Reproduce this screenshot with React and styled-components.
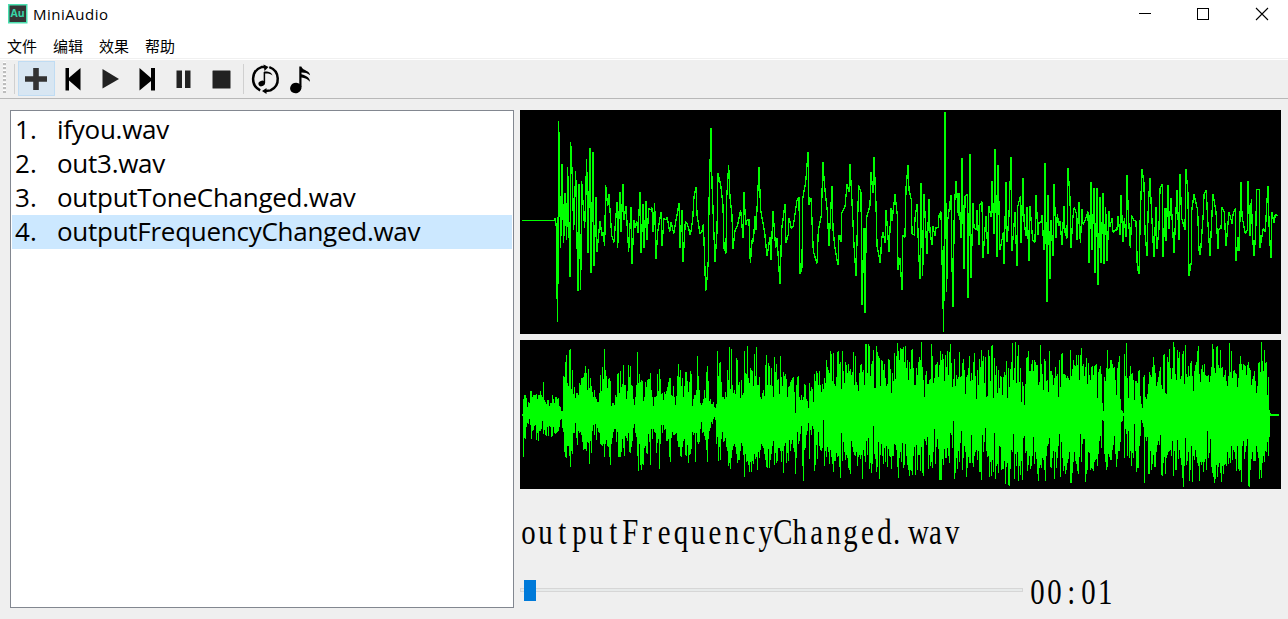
import React from "react";
import styled, { createGlobalStyle } from "styled-components";

const GlobalStyle = createGlobalStyle`
  * { box-sizing: border-box; }
  body { margin: 0; background: #efefef; overflow: hidden; }
`;

const Window = styled.div`
  width: 1288px;
  height: 619px;
  display: flex;
  flex-direction: column;
  background: #efefef;
  color: #000;
  font-family: "Open Sans", "Noto Sans CJK SC", sans-serif;
`;

const TitleBar = styled.header`
  height: 30px;
  flex: none;
  display: flex;
  align-items: flex-start;
  background: #fff;
  padding-left: 8px;
`;

const AppIcon = styled.svg`
  width: 20px;
  height: 20px;
  margin-top: 4px;
  display: block;
`;

const AppTitle = styled.h1`
  margin: 0 auto 0 5px;
  font-size: 15px;
  font-weight: 400;
  line-height: 28px;
  letter-spacing: 0.5px;
`;

const WindowControls = styled.div`
  display: flex;
`;

const ControlButton = styled.button`
  width: 58px;
  height: 28px;
  padding: 0;
  border: 0;
  background: transparent;

  svg { display: block; }
`;

const MenuBar = styled.nav`
  height: 30px;
  flex: none;
  display: flex;
  gap: 16px;
  padding-left: 7px;
  background: #fff;
  border-bottom: 1px solid #fff;
  box-shadow: inset 0 -1px 0 #f0f0f0;
`;

const MenuItem = styled.span`
  font: 15px/32px "Noto Sans CJK SC", sans-serif;
`;

const ToolBar = styled.div`
  height: 39px;
  flex: none;
  display: flex;
  align-items: flex-start;
  padding: 1px 0 0 3px;
  border-bottom: 1px solid #b8b8b8;
`;

const Grip = styled.div`
  width: 3px;
  height: 31px;
  margin: 1px 8px 0 0;
  background: repeating-linear-gradient(to bottom, #fff 0 1px, #bdbdbd 1px 3px, #efefef 3px 4px);
`;

const Separator = styled.div`
  width: 1px;
  height: 30px;
  margin: 3px 3px 0 ${(p) => (p.$left ? p.$left : 0)}px;
  background: #d0d0d0;
`;

const ToolButton = styled.button`
  width: 37px;
  height: 35px;
  padding: 0;
  border: 1px solid ${(p) => (p.$active ? "#c0dcf3" : "transparent")};
  background: ${(p) => (p.$active ? "#d8e6f2" : "transparent")};

  svg { display: block; margin: -1px; }
`;

const Content = styled.main`
  flex: 1;
  display: flex;
  gap: 6px;
  padding: 11px 7px 11px 10px;
`;

const PlayList = styled.ol`
  width: 504px;
  height: 498px;
  margin: 0;
  padding: 2px 1px;
  list-style: none;
  background: #fff;
  border: 1px solid #828790;
`;

const Track = styled.li`
  height: 34px;
  display: flex;
  padding-left: 3px;
  font: 26px/32px "Open Sans", "Noto Sans", sans-serif;
  background: ${(p) => (p.$selected ? "#cce8ff" : "transparent")};
`;

const TrackNumber = styled.span`
  width: 42px;
`;

const TrackName = styled.span`
  white-space: nowrap;
  letter-spacing: -0.27px;
`;

const Player = styled.section`
  width: 761px;
  display: flex;
  flex-direction: column;
`;

const WavePanel = styled.svg`
  display: block;
  flex: none;
  width: 761px;
  height: ${(p) => p.$height}px;
  margin-bottom: 6px;
  background: #000;
  shape-rendering: crispEdges;
`;

const FixedText = styled.span`
  display: inline-block;
  font: 36px/48px "Liberation Serif", serif;
  white-space: nowrap;
  transform: scaleX(0.8);
  transform-origin: left center;
`;

const Cell = styled.span`
  display: inline-flex;
  width: 21.2px;
  justify-content: ${(p) => (p.$left ? "flex-start" : "center")};
`;

const NowPlaying = styled.div`
  height: 48px;
  flex: none;
  margin-top: 13px;
`;

const SeekRow = styled.div`
  display: flex;
  align-items: center;
  gap: 6px;
  height: 32px;
  margin-top: 20px;
`;

const Groove = styled.div`
  width: 503px;
  height: 4px;
  flex: none;
  display: flex;
  align-items: center;
  padding-left: 3px;
  margin-top: -4px;
  background: #e7eaea;
  border: 1px solid #d6d6d6;
`;

const Thumb = styled.div`
  width: 12px;
  height: 21px;
  flex: none;
  background: #007ad9;
`;

const tracks = ["ifyou.wav", "out3.wav", "outputToneChanged.wav", "outputFrequencyChanged.wav"];

// Detail view samples: each segment lists x,y pairs relative to its own start.
const detail = [
  { start: -15, points: "20,346 117,346 121,340 124,366 125,510 128,650 131,48 137,428 141,178 146,415 150,265 155,406 158,187 165,516 167,112 172,217 176,376 182,199 189,558 192,238 197,556 200,229 209,370 215,163 219,444 225,130 228,505 234,140 237,484 243,275 246,440 255,347 261,394 264,382 269,422 272,241 278,304 282,268 290,392 297,412 306,292 308,428 315,260 318,382 324,238 327,344 333,302 341,440 348,305 351,478 357,344 360,368 365,347 369,385 375,260 378,445 384,298 387,430 393,287 396,404 401,310 406,315 411,308 414,380 419,295 423,463 428,380 438,322 441,424 447,340 452,344 457,337 464,382 468,350 476,386 492,295 495,428 501,314 504,472 511,350 517,356 526,391 533,344 537,275 543,247 546,328 555,386 561,380 565,356 568,434 572,559 577,512 580,463 582,295 585,184 588,68" },
  { start: 555, points: "18,68 21,238 24,312 30,472 36,380 39,205 47,240 54,300 57,430 63,445 65,280 71,181 75,278 81,332 84,433 90,376 98,360 107,314 114,400 117,260 122,361 127,344 132,344 136,475 142,398 145,412 150,332 153,376 162,187 167,316 179,382 186,454 195,397 198,466 204,317 212,430 216,398 225,538 230,373 240,298 243,415 250,388 252,338 259,370 265,362 276,286 282,277 285,508 291,488 293,282 302,232 309,142 312,301 318,278 325,440 336,475 340,376 349,330 354,172 358,236 367,320 372,424 381,242 384,373 390,430 399,481 402,391 408,412 410,324 420,306 426,238 432,260 435,178 441,290 447,420 453,512 458,340 461,241 468,262 471,601 477,370 480,625 484,340 495,302 498,202 504,265 507,155 513,298 516,422 526,475 530,400 534,380 541,415 543,314 552,440 558,308 561,348 570,268" },
  { start: 1125, points: "0,268 7,330 9,496 15,460 21,556 23,390 30,397 33,250 39,181 42,255 49,284 51,385 58,391 60,340 66,298 71,440 75,523 78,235 83,512 87,268 96,448 102,281 105,380 111,421 114,364 120,394 123,367 130,367 132,330 138,320 141,455 146,680 150,22 155,560 158,347 168,271 170,437 174,605 178,312 183,227 190,332 192,265 198,400 201,160 207,493 210,275 217,268 219,578 225,148 228,520 234,295 237,367 244,374 246,316 252,421 254,300 261,290 264,460 273,332 279,448 282,304 288,337 291,227 297,388 300,133 306,455 309,181 315,436 325,382 327,478 333,232 336,412 342,330 348,157 351,439 360,322 366,484 368,305 376,274 378,415 384,220 387,345 393,394 396,307 402,469 405,302 413,406 420,412 423,271 429,391 432,352 438,352 441,331 447,436 450,175 456,590 459,271 465,523 468,346 474,452 477,236 483,400 487,328 492,364 495,347 501,421 507,302 510,382 516,400 519,190 525,278 528,430 533,345 537,308 544,324 546,406 552,292 556,415 561,313 564,358 570,348" },
  { start: 1695, points: "0,348 9,320 12,475 18,232 21,436 27,250 30,505 36,250 39,541 45,275 48,475 54,265 57,478 62,307 66,469 72,317 75,367 81,338 84,382 90,376 96,374 99,332 105,391 108,271 114,410 118,340 123,397 126,211 130,328 136,430 140,331 145,344 153,349 157,488 162,508 166,325 171,193 177,235 180,382 186,452 190,300 195,220 200,330 207,457 213,305 216,433 222,370 225,250 232,236 234,457 240,310 243,409 249,241 252,373 258,280 267,445 271,360 276,256 282,406 285,208 290,340 300,376 303,193 309,268 312,514 319,470 320,318 327,268 338,316 342,436 346,451 355,325 357,270 364,256 367,325 375,454 380,345 384,268 393,320 399,433 401,373 408,370 411,307 418,322 423,424 432,320 441,356 444,328 451,310 453,469 459,395 462,439 468,232 471,334 481,385 487,374 489,229 495,394 499,283 503,398 507,452 512,387 515,254 523,252 525,428 535,370 541,382 545,300 549,244 553,382 558,460 561,322 567,355 571,328 578,331" },
];

// Overview envelope: "x:y" steps for the upper and lower edges of the filled wave.
const overview = [
  {
    start: -15,
    end: 780,
    top: "21:233 24:190 27:178 33:186 36:212 39:198 42:200 45:166 48:166 51:183 54:178 63:175 66:190 69:178 75:166 78:178 81:184 84:139 87:192 90:198 93:204 96:192 102:209 105:201 111:178 114:190 117:201 120:184 126:190 129:186 132:210 135:213 138:225 144:121 147:123 150:79 153:58 156:142 159:150 162:42 165:39 168:160 171:102 174:175 177:153 180:186 183:172 189:177 192:142 195:148 198:126 204:123 207:111 210:91 213:112 216:163 219:100 222:157 225:127 228:150 231:168 234:183 237:163 240:183 243:190 246:198 252:172 255:117 258:165 261:94 264:130 267:40 270:102 273:121 276:157 279:130 282:126 285:136 288:210 291:201 297:208 300:178 303:184 306:114 309:112 312:171 315:105 318:153 321:144 324:88 327:148 333:189 336:165 339:88 342:124 345:91 348:148 351:150 354:190 357:208 360:183 363:148 366:48 369:142 372:114 375:138 378:132 381:136 384:195 387:183 390:138 393:153 396:132 399:130 405:112 408:163 411:183 414:210 417:183 423:180 426:114 429:165 432:100 435:130 438:175 441:171 444:192 447:168 450:174 453:166 456:153 459:138 462:126 468:178 471:180 474:151 477:184 480:208 483:180 486:121 489:85 492:123 495:102 498:150 501:126 504:184 507:150 510:108 516:136 519:168 522:138 525:105 528:115 531:210 534:189 537:178 543:163 546:60 549:121 552:162 555:201 558:207 561:202 564:190 567:163 570:186 573:108 576:90 579:136 582:195 585:190 588:204 594:198 597:213 600:216 603:205 606:45 609:121 612:82 615:79 618:138 621:183 627:189 630:168 633:183 636:102 639:132 642:34 645:159 648:40 651:148 654:171 657:163 660:175 663:66 666:72 669:148 672:138 675:186 678:132 681:177 684:171 687:45 690:111 693:114 696:30 699:127 702:142 705:97 708:102 711:105 714:150 717:55 720:120 723:34 726:146 729:147 732:123 735:183 738:189 741:172 744:163 747:180 750:88 753:57 756:148 759:82 762:91 765:148 768:96 771:150 774:183 777:64",
    bottom: "21:240 24:362 27:306 30:309 33:273 36:262 39:264 42:249 45:267 48:308 51:285 54:282 57:270 60:267 63:312 66:292 69:314 72:286 78:279 81:255 84:294 87:282 90:297 93:300 96:273 99:300 102:270 105:273 108:303 111:300 114:273 117:291 120:294 123:290 126:288 129:285 132:273 135:252 138:249 141:276 144:288 147:348 150:362 153:366 156:330 162:360 165:392 168:346 171:354 174:291 180:262 183:306 186:326 189:285 192:290 195:288 198:297 201:318 204:342 207:340 213:345 216:318 219:321 222:384 225:315 228:351 231:286 234:267 237:297 240:264 243:312 246:276 249:288 252:291 255:324 258:326 261:330 264:324 267:362 270:324 273:312 276:330 279:333 282:362 285:386 288:324 291:306 294:288 297:279 300:280 303:318 306:288 309:362 315:362 318:348 321:308 324:336 327:360 330:300 333:306 336:315 339:291 342:348 345:351 348:333 351:315 354:276 357:264 360:291 363:303 366:360 369:404 372:324 375:386 378:402 381:384 384:387 387:336 390:330 393:351 396:354 399:294 402:318 405:387 408:280 411:308 414:280 417:288 420:291 423:351 426:320 429:310 432:399 435:324 438:267 441:292 444:267 447:282 450:279 453:315 459:310 462:362 465:378 468:306 471:288 474:297 480:294 483:290 486:315 489:333 495:360 498:362 501:333 504:315 507:309 510:357 513:360 516:326 519:380 522:357 525:354 528:338 531:288 534:297 537:291 540:378 543:290 546:318 549:324 552:318 555:279 558:258 561:291 564:288 567:300 570:312 573:342 576:378 579:308 582:285 585:276 588:258 591:264 594:249 597:243 600:252 603:324 606:303 609:375 612:332 615:372 618:309 621:288 624:318 627:315 630:306 633:333 636:345 639:390 642:381 645:399 648:366 651:342 654:330 657:324 660:333 663:354 666:380 669:372 672:372 675:345 678:320 681:330 684:357 687:422 690:354 693:378 696:375 699:387 702:408 705:378 708:408 711:375 714:384 717:354 720:370 723:363 726:402 729:348 732:366 735:342 738:324 741:330 744:336 747:354 750:372 753:392 756:396 759:340 762:396 765:372 768:354 771:330 774:315 777:387",
  },
  {
    start: 750,
    end: 780,
    top: "15:108 18:84 21:132 24:130 27:174 30:60 33:123 36:150 39:108 42:120 45:114 48:129 51:183 54:153 57:150 60:138 63:132 66:126 69:123 72:168 75:231 78:148 81:123 84:120 87:183 90:192 93:178 96:192 99:183 102:144 105:147 108:189 111:195 114:216 117:141 120:165 123:153 126:159 129:198 132:114 135:135 138:105 141:111 144:148 147:105 150:147 153:168 156:144 159:159 162:126 165:141 168:72 171:94 174:102 177:111 180:45 183:54 186:135 189:52 192:144 195:150 198:123 201:48 204:45 207:84 210:78 213:159 216:45 219:105 222:141 225:78 228:87 231:111 234:84 237:105 240:99 243:117 246:108 249:48 252:147 255:60 258:138 261:148 264:165 267:111 270:87 273:84 276:108 279:102 282:147 285:24 291:111 294:24 297:30 300:120 303:84 306:75 309:42 312:156 318:30 321:48 324:60 327:66 330:150 333:72 336:75 339:102 342:84 345:126 348:150 351:144 354:69 357:72 360:99 363:171 366:111 369:135 372:51 375:129 378:60 381:22 384:45 387:72 390:36 393:38 399:33 402:78 405:30 408:96 411:72 414:132 417:78 420:99 423:42 426:39 429:96 432:147 438:96 441:117 444:78 447:63 450:72 453:18 456:93 459:132 462:183 465:117 468:105 471:144 477:132 480:129 483:24 486:60 489:141 492:126 495:87 498:84 501:78 504:123 507:87 510:45 513:72 516:54 519:69 522:135 525:57 528:93 531:45 534:117 537:48 540:24 543:81 546:153 549:129 552:69 555:150 558:117 561:129 564:123 567:48 570:123 573:120 576:81 579:69 582:102 585:174 588:123 591:117 594:96 597:60 600:135 603:111 606:132 609:78 612:51 615:120 618:189 621:102 624:147 627:69 630:93 633:42 636:75 639:60 642:141 645:63 648:183 651:180 654:42 657:60 660:135 663:30 666:27 669:186 672:66 675:117 678:90 681:171 684:102 687:156 690:120 693:123 696:177 699:123 702:108 705:117 708:75 711:186 714:96 717:153 720:99 723:78 726:21 729:132 732:96 735:18 738:141 741:60 744:27 747:138 750:96 753:198 756:138 759:150 762:207 765:144 768:66 771:63 774:45 777:105",
    bottom: "15:351 18:381 21:375 24:336 30:345 33:378 36:345 39:411 42:330 45:321 48:381 51:351 54:375 57:312 60:345 63:324 66:312 69:336 72:348 75:414 78:366 81:288 84:324 87:315 90:294 93:270 96:390 99:435 102:342 105:336 108:297 111:285 114:261 117:369 120:282 123:297 126:270 129:279 132:405 135:387 138:327 141:369 144:288 147:330 150:342 153:345 156:336 159:252 162:390 165:345 168:363 171:333 174:348 177:384 180:342 183:363 186:384 189:408 192:375 198:351 201:363 204:360 207:393 210:426 213:291 216:375 219:318 222:348 225:372 228:357 231:366 234:396 237:402 240:414 243:315 246:333 249:348 252:357 255:360 258:348 261:390 264:363 267:357 270:369 273:357 276:429 279:342 282:360 285:378 288:315 291:357 294:306 297:399 300:381 303:411 306:384 309:270 312:354 315:369 318:408 321:393 324:318 327:429 330:357 333:324 336:360 339:384 342:336 345:378 348:330 351:393 354:339 357:360 360:363 363:399 366:360 372:324 375:327 378:342 381:393 384:426 387:366 390:348 393:378 396:321 399:396 402:387 405:324 408:360 411:387 414:402 417:420 420:402 423:405 426:417 429:360 432:333 435:417 438:327 441:402 444:357 450:405 453:333 456:411 459:420 462:309 465:315 468:327 471:303 474:399 477:357 480:390 483:378 486:396 489:348 492:279 495:384 498:333 501:309 504:339 507:432 516:369 519:387 522:339 525:366 531:336 534:360 537:381 540:291 543:297 546:336 549:255 552:429 555:411 558:366 561:399 564:345 567:378 570:321 573:285 576:402 579:366 582:330 585:348 588:423 591:396 594:363 597:381 603:297 606:381 609:393 612:360 615:348 618:342 621:372 624:345 627:408 633:432 636:297 639:348 642:318 645:276 648:345 651:363 654:360 657:423 660:378 663:420 666:372 669:408 672:291 675:429 678:390 681:384 684:411 687:330 690:333 693:402 696:399 702:375 705:444 708:393 711:381 714:447 717:450 720:399 723:342 726:348 729:294 732:429 735:354 738:390 741:348 744:435 747:390 750:417 753:375 756:432 759:306 762:300 765:351 768:345 771:405 774:387 777:360",
  },
  {
    start: 1515,
    end: 762,
    top: "15:105 18:84 21:72 24:105 27:72 30:78 33:87 39:147 42:138 45:27 48:84 51:114 54:162 57:69 60:75 63:135 66:132 69:168 72:45 75:105 81:117 84:147 87:126 90:93 93:120 96:114 99:183 102:72 105:153 108:54 111:51 114:114 120:117 123:126 126:120 129:126 132:132 135:43 138:120 141:99 144:72 147:87 150:90 153:57 156:87 159:57 162:132 165:57 168:36 171:90 174:84 177:120 180:93 183:66 186:144 189:81 192:117 195:132 198:93 201:90 204:117 207:90 210:87 213:84 216:186 219:108 222:99 225:90 228:114 231:201 234:225 237:122 240:135 243:96 246:42 249:99 252:96 255:72 261:84 264:96 267:93 270:132 273:177 276:96 279:78 282:60 285:189 288:222 291:225 294:231 297:54 300:120 303:21 306:126 309:186 312:120 315:90 318:114 321:111 324:132 327:192 330:135 336:141 339:105 342:102 345:180 348:204 351:216 354:123 357:117 360:183 363:189 366:174 369:144 372:108 375:117 378:123 381:93 384:63 387:87 390:111 393:150 396:138 399:123 402:105 405:93 408:147 411:159 414:57 417:54 420:171 423:174 426:63 429:78 432:39 435:96 438:129 441:96 444:18 447:33 450:114 453:132 456:42 459:66 462:48 465:129 468:120 471:54 474:45 477:144 480:27 483:114 486:123 489:90 492:120 495:81 498:75 501:120 504:165 507:105 510:87 513:78 516:45 519:30 522:114 525:138 528:99 531:87 534:108 537:84 540:117 543:120 549:117 552:138 555:120 558:93 561:24 564:39 567:96 570:111 573:33 576:30 579:87 582:96 585:42 588:96 591:93 594:123 597:117 600:102 603:135 606:150 609:120 612:21 615:108 618:45 621:126 624:105 627:102 630:111 633:114 636:153 639:126 642:84 645:60 648:84 651:102 654:84 657:87 660:90 663:117 666:87 669:78 672:96 675:102 678:147 681:129 684:120 687:105 690:135 693:171 696:150 699:81 702:78 705:108 708:18 711:75 714:105 717:42 720:81 723:78 726:177 729:123 732:222 735:231 738:234",
    bottom: "15:399 18:390 21:360 24:303 27:384 30:348 33:369 36:414 39:435 42:396 45:387 48:396 51:366 54:372 57:402 60:435 63:360 66:330 69:324 72:306 75:393 78:396 81:366 84:345 87:429 90:348 93:396 96:366 99:330 102:294 105:423 108:318 111:366 114:405 117:390 120:414 123:402 126:381 129:369 132:348 135:441 141:411 144:378 147:348 150:375 153:384 156:405 159:414 162:363 165:294 168:378 171:324 174:309 180:438 183:414 186:402 189:348 192:351 195:402 198:396 201:399 204:405 207:378 210:372 213:369 216:390 219:354 222:315 225:300 228:336 231:252 234:255 237:354 240:378 243:402 246:393 249:354 252:363 255:372 261:342 264:327 267:300 270:354 273:393 276:369 279:345 282:345 285:318 288:258 291:255 294:240 297:366 300:279 303:294 306:360 309:285 312:366 315:345 318:390 321:351 324:366 327:264 330:345 333:408 336:396 339:396 342:330 345:300 348:252 351:261 354:273 357:441 360:303 363:315 366:303 369:414 372:414 375:345 378:402 381:384 384:357 387:393 390:393 393:348 396:327 399:315 402:327 405:297 408:417 411:420 414:381 417:363 420:414 423:366 426:357 429:348 432:345 435:342 438:360 441:315 444:420 447:345 450:402 453:402 456:312 459:369 462:342 465:366 468:387 471:426 474:453 477:390 480:306 483:387 486:375 489:348 492:435 495:402 498:330 501:438 504:360 507:372 510:342 513:363 516:381 519:390 522:435 525:378 528:387 531:378 534:408 537:378 540:369 543:402 546:285 549:366 552:351 555:309 558:393 561:411 564:423 567:441 570:429 573:387 576:423 579:393 582:381 585:411 588:438 591:390 594:414 597:387 600:384 603:390 606:348 609:384 612:366 615:381 618:330 621:372 624:342 627:348 630:369 633:405 636:330 639:399 642:405 645:402 648:438 651:330 654:315 657:369 660:348 663:330 666:309 669:450 672:453 675:402 678:369 681:348 684:375 690:375 693:330 696:348 699:366 702:429 705:402 708:426 711:381 714:360 717:378 720:345 723:348 726:318 729:360 732:303 735:240 738:239",
  },
];

const parseSteps = (text, end) => {
  const steps = text.split(" ").map((pair) => pair.split(":").map(Number));
  return steps.flatMap(([x, y], i) => [[x, y], [i + 1 < steps.length ? steps[i + 1][0] : end, y]]);
};

const envelopePath = ({ top, bottom, end }) => {
  const outline = [...parseSteps(top, end), ...parseSteps(bottom, end).reverse()];
  return `M${outline.map((p) => p.join(",")).join("L")}Z`;
};

const icons = {
  add: <path d="M15.2 7h5.6v8.2H29v5.6h-8.200v8.200h-5.600v-8.200H7v-5.600h8.200z" fill="#333" />,
  prev: <path d="M10.500 7h3.500v9.800L25.500 7v22.500L14 19.500v10h-3.500z" fill="#000" />,
  play: <path d="M10.500 8L27 18 10.500 27.500z" fill="#222" />,
  next: <path d="M10.500 7L22 17V7h4v22.500h-4v-9.500L10.500 29.500z" fill="#000" />,
  pause: <path d="M10.500 9.500H16V27h-5.500zM19 9.500h5.500V27H19z" fill="#222" />,
  stop: <rect x="9.500" y="9.500" width="18" height="18" rx="0.500" fill="#222" />,
};

const ToneIcon = () => (
  <svg width="37" height="35" viewBox="0 0 37 35">
    <g fill="none" stroke="#000" strokeWidth="2.500">
      <path d="M13.200 29.300A12.600 12.600 0 0 1 14.500 6.100L18.500 6" />
      <path d="M22.300 6.100A12.600 12.600 0 0 1 23.500 29.400L18.500 30" />
    </g>
    <path d="M16.500 3.500L21.500 6l-4 4zM19.500 27l-4.500 3 4.500 3z" fill="#000" />
    <path d="M17.400 11v11" stroke="#000" strokeWidth="1.500" />
    <path d="M17 10.500h3c3 .500 5 1.600 5.500 4-2-1.700-4.200-2.200-7.800-2z" fill="#000" />
    <ellipse cx="14.700" cy="22.500" rx="3.300" ry="2.700" transform="rotate(-20 14.700 22.500)" fill="#000" />
  </svg>
);

const NoteIcon = () => (
  <svg width="37" height="35" viewBox="0 0 37 35">
    <path d="M15.300 5.500h2c.8 2.600 3.200 3.200 5.400 4.400 2 1 3.200 2.500 3.400 4.400-2.600-2.300-5-2.700-8.600-2.800v1.700c5 1.400 8.500 3.300 8.400 7.600-2.300-3-5-3.900-8.400-4.300V26h-2.200z" fill="#000" />
    <ellipse cx="11.800" cy="27" rx="5.800" ry="5.200" transform="rotate(-20 11.800 27)" fill="#000" />
  </svg>
);

const Tool = ({ name, active }) => (
  <ToolButton $active={active} aria-label={name}>
    <svg width="37" height="35" viewBox="0 0 37 35">{icons[name]}</svg>
  </ToolButton>
);

// Sets serif text on a fixed pitch, one cell per character.
const FixedPitch = ({ children }) => (
  <FixedText>
    {[...children].map((char, i) => (
      <Cell key={i} $left={char === "."}>{char}</Cell>
    ))}
  </FixedText>
);

export default function App() {
  return (
    <Window>
      <GlobalStyle />
      <TitleBar>
        <AppIcon viewBox="0 0 20 20">
          <rect x="0.750" y="0.750" width="18" height="18" fill="#353535" stroke="#4be0b0" strokeWidth="1.500" />
          <text x="9.700" y="13.300" textAnchor="middle" fontFamily="Open Sans, sans-serif" fontWeight="700" fontSize="10.500" fill="#38d6a8">Au</text>
        </AppIcon>
        <AppTitle>MiniAudio</AppTitle>
        <WindowControls>
          <ControlButton aria-label="minimize">
            <svg width="58" height="28"><path d="M25 13.500h12" stroke="#000" /></svg>
          </ControlButton>
          <ControlButton aria-label="maximize">
            <svg width="58" height="28"><rect x="25.500" y="8.500" width="11" height="11" fill="none" stroke="#000" /></svg>
          </ControlButton>
          <ControlButton aria-label="close">
            <svg width="58" height="28"><path d="M26 8l12 12M38 8L26 20" stroke="#000" strokeWidth="1.100" /></svg>
          </ControlButton>
        </WindowControls>
      </TitleBar>
      <MenuBar>
        {["文件", "编辑", "效果", "帮助"].map((label) => (
          <MenuItem key={label}>{label}</MenuItem>
        ))}
      </MenuBar>
      <ToolBar>
        <Grip />
        <Separator />
        <Tool name="add" active />
        <Tool name="prev" />
        <Tool name="play" />
        <Tool name="next" />
        <Tool name="pause" />
        <Tool name="stop" />
        <Separator $left={3} />
        <ToolButton aria-label="tone"><ToneIcon /></ToolButton>
        <ToolButton aria-label="frequency"><NoteIcon /></ToolButton>
      </ToolBar>
      <Content>
        <PlayList>
          {tracks.map((name, i) => (
            <Track key={name} $selected={i === 3}>
              <TrackNumber>{i + 1}.</TrackNumber>
              <TrackName>{name}</TrackName>
            </Track>
          ))}
        </PlayList>
        <Player>
          <WavePanel $height={224} viewBox="0 15 2283 672" preserveAspectRatio="none">
            <g fill="none" stroke="#0f0" strokeWidth="4" strokeLinejoin="bevel">
              {detail.map((s) => (
                <polyline key={s.start} points={s.points} transform={`translate(${s.start} 0)`} />
              ))}
            </g>
          </WavePanel>
          <WavePanel $height={149} viewBox="0 12 2283 447" preserveAspectRatio="none">
            {overview.map((s) => (
              <path key={s.start} d={envelopePath(s)} fill="#0f0" transform={`translate(${s.start} 0)`} />
            ))}
          </WavePanel>
          <NowPlaying><FixedPitch>outputFrequencyChanged.wav</FixedPitch></NowPlaying>
          <SeekRow>
            <Groove><Thumb /></Groove>
            <FixedPitch>00:01</FixedPitch>
          </SeekRow>
        </Player>
      </Content>
    </Window>
  );
}
